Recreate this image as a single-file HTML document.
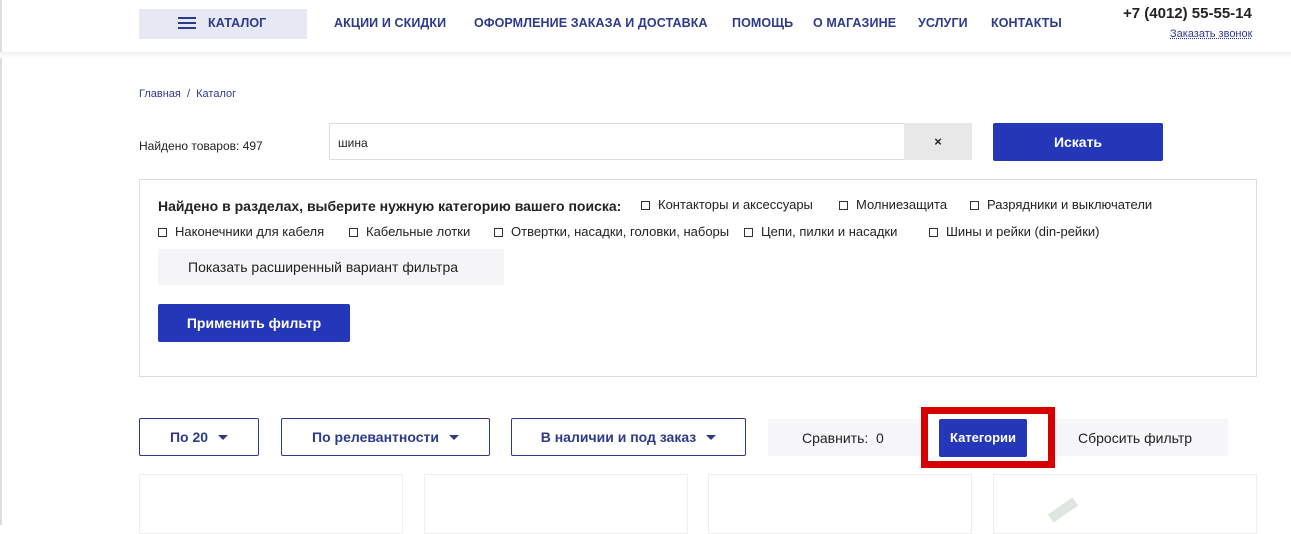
<!DOCTYPE html>
<html><head><meta charset="utf-8"><style>
*{box-sizing:border-box;margin:0;padding:0}
body{width:1291px;height:525px;overflow:hidden;background:#fff;font-family:"Liberation Sans",sans-serif;position:relative;color:#222}
.a{position:absolute}
.nav{font-size:12.5px;font-weight:bold;color:#2d3a8c;top:16px;letter-spacing:.1px}
.cb{display:inline-block;width:9px;height:9px;border:1px solid #333;margin-right:8px;vertical-align:-1px}
.f{font-size:13px;color:#222;position:absolute}
.sel{border:1px solid #2d3a8c;border-radius:2px;height:38px;top:418px;font-size:14px;font-weight:bold;color:#2d3a8c;display:flex;align-items:center;justify-content:center}
.tri{display:inline-block;border-left:5px solid transparent;border-right:5px solid transparent;border-top:5px solid #2d3a8c;margin-left:10px}
.card{border:1px solid #eee;top:474px;height:60px;width:264px}
</style></head><body>
<div class="a" style="left:0;top:0;width:2px;height:525px;background:#ddd"></div>
<div class="a" style="left:0;top:52px;width:1291px;height:6px;background:linear-gradient(#f0f0f2,#fff)"></div>
<div class="a" style="left:139px;top:9px;width:168px;height:30px;background:#e6e8f4"></div>
<div class="a" style="left:178px;top:17px;width:18px;height:2px;background:#2d3a8c;box-shadow:0 5px 0 #2d3a8c,0 10px 0 #2d3a8c"></div>
<div class="a nav" style="left:208px">КАТАЛОГ</div>
<div class="a nav" style="left:334px">АКЦИИ И СКИДКИ</div>
<div class="a nav" style="left:474px">ОФОРМЛЕНИЕ ЗАКАЗА И ДОСТАВКА</div>
<div class="a nav" style="left:732px">ПОМОЩЬ</div>
<div class="a nav" style="left:813px">О МАГАЗИНЕ</div>
<div class="a nav" style="left:918px">УСЛУГИ</div>
<div class="a nav" style="left:991px">КОНТАКТЫ</div>
<div class="a" style="left:1123px;top:5px;font-size:15px;font-weight:bold;color:#222">+7 (4012) 55-55-14</div>
<div class="a" style="left:1170px;top:28px;font-size:11px;color:#2d3a8c;text-decoration:underline dotted">Заказать звонок</div>
<div class="a" style="left:139px;top:88px;font-size:11px;color:#2d3a8c">Главная &nbsp;/ &nbsp;Каталог</div>
<div class="a" style="left:139px;top:139px;font-size:12px">Найдено товаров: 497</div>
<div class="a" style="left:329px;top:123px;width:576px;height:37px;border:1px solid #ddd;font-size:12px;padding:12px 8px">шина</div>
<div class="a" style="left:904px;top:123px;width:68px;height:37px;background:#e8e8e8;text-align:center;line-height:37px;font-size:13px;font-weight:bold">×</div>
<div class="a" style="left:993px;top:123px;width:170px;height:38px;background:#2337b8;color:#fff;font-weight:bold;font-size:14px;text-align:center;line-height:38px;border-radius:2px">Искать</div>
<div class="a" style="left:139px;top:179px;width:1118px;height:198px;border:1px solid #ddd"></div>
<div class="a" style="left:158px;top:198px;font-size:14px;font-weight:bold">Найдено в разделах, выберите нужную категорию вашего поиска:</div>
<div class="f" style="left:641px;top:197px"><span class="cb"></span>Контакторы и аксессуары</div>
<div class="f" style="left:839px;top:197px"><span class="cb"></span>Молниезащита</div>
<div class="f" style="left:970px;top:197px"><span class="cb"></span>Разрядники и выключатели</div>
<div class="f" style="left:158px;top:224px"><span class="cb"></span>Наконечники для кабеля</div>
<div class="f" style="left:349px;top:224px"><span class="cb"></span>Кабельные лотки</div>
<div class="f" style="left:494px;top:224px"><span class="cb"></span>Отвертки, насадки, головки, наборы</div>
<div class="f" style="left:744px;top:224px"><span class="cb"></span>Цепи, пилки и насадки</div>
<div class="f" style="left:929px;top:224px"><span class="cb"></span>Шины и рейки (din-рейки)</div>
<div class="a" style="left:158px;top:249px;width:346px;height:36px;background:#f5f5f7;font-size:14px;line-height:36px;padding-left:30px">Показать расширенный вариант фильтра</div>
<div class="a" style="left:158px;top:304px;width:192px;height:38px;background:#2337b8;color:#fff;font-weight:bold;font-size:14px;text-align:center;line-height:38px;border-radius:2px">Применить фильтр</div>
<div class="a sel" style="left:139px;width:120px">По 20<span class="tri"></span></div>
<div class="a sel" style="left:281px;width:209px">По релевантности<span class="tri"></span></div>
<div class="a sel" style="left:511px;width:235px">В наличии и под заказ<span class="tri"></span></div>
<div class="a" style="left:768px;top:419px;width:460px;height:37px;background:#f7f7f9"></div>
<div class="a" style="left:802px;top:430px;font-size:14px">Сравнить:&nbsp; 0</div>
<div class="a" style="left:1078px;top:430px;font-size:14px">Сбросить фильтр</div>
<div class="a" style="left:921px;top:407px;width:134px;height:61px;border:7px solid #d60000;background:#fff"></div>
<div class="a" style="left:939px;top:419px;width:88px;height:38px;background:#2337b8;border-radius:2px;color:#fff;font-weight:bold;font-size:13px;text-align:center;line-height:38px">Категории</div>
<div class="a card" style="left:139px"></div>
<div class="a card" style="left:424px"></div>
<div class="a card" style="left:708px"></div>
<div class="a card" style="left:993px"></div>
<div class="a" style="left:1048px;top:505px;width:30px;height:10px;background:#dfe6e0;transform:rotate(-35deg)"></div>
</body></html>
